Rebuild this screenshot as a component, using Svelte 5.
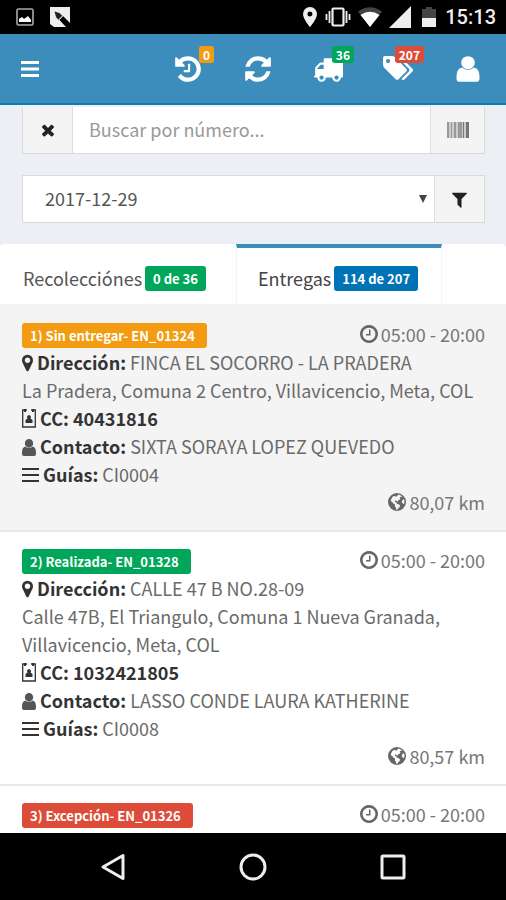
<script>
  const glyphs = {
    history: 'M1664 896q0 156-61 298t-164 245-245 164-298 61q-172 0-327-72.5t-264-204.5q-7-10-6.5-22.5t8.5-20.5l137-138q10-9 25-9 16 2 23 12 73 95 179 147t225 52q104 0 198.5-40.5t163.5-109.5 109.5-163.5 40.5-198.5-40.5-198.5-109.5-163.5-163.5-109.5-198.5-40.5q-98 0-188 35.5t-160 101.5l137 138q31 30 14 69-17 40-59 40h-448q-26 0-45-19t-19-45v-448q0-42 40-59 39-17 69 14l130 129q107-101 244.5-156.5t284.5-55.5q156 0 298 61t245 164 164 245 61 298zm-640-288v448q0 14-9 23t-23 9h-320q-14 0-23-9t-9-23v-64q0-14 9-23t23-9h224v-352q0-14 9-23t23-9h64q14 0 23 9t9 23z',
    refresh: 'M1639 1056q0 5-1 7-64 268-268 434.5t-478 166.5q-146 0-282.5-55t-243.5-157l-129 129q-19 19-45 19t-45-19-19-45v-448q0-26 19-45t45-19h448q26 0 45 19t19 45-19 45l-137 137q71 66 161 102t187 36q134 0 250-65t186-179q11-17 53-117 8-23 30-23h192q13 0 22.5 9.5t9.5 22.5zm25-800v448q0 26-19 45t-45 19h-448q-26 0-45-19t-19-45 19-45l138-138q-148-137-349-137-134 0-250 65t-186 179q-11 17-53 117-8 23-30 23h-199q-13 0-22.5-9.5t-9.5-22.5v-7q65-268 270-434.5t480-166.5q146 0 284 55.5t245 156.5l130-129q19-19 45-19t45 19 19 45z',
    truck: 'M640 1408q0-52-38-90t-90-38-90 38-38 90 38 90 90 38 90-38 38-90zm-384-512h384v-256h-158q-13 0-22 9l-195 195q-9 9-9 22v30zm1280 512q0-52-38-90t-90-38-90 38-38 90 38 90 90 38 90-38 38-90zm256-1088v1024q0 15-4 26.5t-13.5 18.5-16.5 11.5-23.5 6-22.5 2-25.5 0-22.5-.5q0 106-75 181t-181 75-181-75-75-181h-384q0 106-75 181t-181 75-181-75-75-181h-64q-3 0-22.5.5t-25.5 0-22.5-2-23.5-6-16.5-11.5-13.5-18.5-4-26.5q0-26 19-45t45-19v-320q0-8-.5-35t0-38 2.5-34.5 6.5-37 14-30.5 22.5-30l198-198q19-19 50.5-32t58.5-13h160v-192q0-26 19-45t45-19h1024q26 0 45 19t19 45z',
    tags: 'M448 448q0-53-37.5-90.5t-90.5-37.5-90.5 37.5-37.5 90.5 37.5 90.5 90.5 37.5 90.5-37.5 37.5-90.5zm1067 576q0 53-37 90l-491 492q-39 37-91 37-53 0-90-37l-715-716q-38-37-64.5-101t-26.5-117v-416q0-52 38-90t90-38h416q53 0 117 26.5t102 64.5l715 714q37 39 37 91zm384 0q0 53-37 90l-491 492q-39 37-91 37-36 0-59-14t-53-45l470-470q37-37 37-90 0-52-37-91l-715-714q-38-38-102-64.5t-117-26.5h224q53 0 117 26.5t102 64.5l715 714q37 39 37 91z',
    user: 'M896 128a410 390 0 1 1 0 780a410 390 0 1 1 0-780zM530 810q366 280 732 0q320 60 320 560v110q0 184-184 184h-1004q-184 0-184-184v-110q0-500 320-560z',
    times: 'M1490 1322q0 40-28 68l-136 136q-28 28-68 28t-68-28l-294-294-294 294q-28 28-68 28t-68-28l-136-136q-28-28-28-68t28-68l294-294-294-294q-28-28-28-68t28-68l136-136q28-28 68-28t68 28l294 294 294-294q28-28 68-28t68 28l136 136q28 28 28 68t-28 68l-294 294 294 294q28 28 28 68z',
    filter: 'M1595 295q17 41-14 70l-493 493v742q0 42-39 59-13 5-25 5-27 0-45-19l-256-256q-19-19-19-45v-486l-493-493q-31-29-14-70 17-39 59-39h1280q42 0 59 39z',
    clock: 'M1024 544v448q0 14-9 23t-23 9h-320q-14 0-23-9t-9-23v-64q0-14 9-23t23-9h224v-352q0-14 9-23t23-9h64q14 0 23 9t9 23zm416 352q0-148-73-273t-198-198-273-73-273 73-198 198-73 273 73 273 198 198 273 73 273-73 198-198 73-273zm224 0q0 209-103 385.5t-279.5 279.5-385.5 103-385.5-103-279.5-279.5-103-385.5 103-385.5 279.5-279.5 385.5-103 385.5 103 279.5 279.5 103 385.5z',
    marker: 'M1152 640q0-106-75-181t-181-75-181 75-75 181 75 181 181 75 181-75 75-181zm256 0q0 109-33 179l-364 774q-16 33-47.5 52t-67.5 19-67.5-19-46.5-52l-365-774q-33-70-33-179 0-212 150-362t362-150 362 150 150 362z',
    globe: 'M896 128a768 768 0 1 0 0 1536a768 768 0 1 0 0-1536zM1010 260q190 30 330 176l-70 40-90-30-60 60 70 70-40 110-120 30-60 110-130 10-30-90-100 50 20 100 130 40 20 110 130 30 150 110-40 150-110 80-60 130-130 10-10-180-100-110 20-150-130-70-110-160-130-70 20-90q50-190 190-320l130-30 80 60 90-20zM1330 760l100-90 80 40q30 110 20 230l-60 150-90-90-80-60z',
  };

  const actions = [
    { icon: 'history', label: 'Historial', count: '0', tone: 'orange' },
    { icon: 'refresh', label: 'Actualizar' },
    { icon: 'truck', label: 'Recolecciones', count: '36', tone: 'green' },
    { icon: 'tags', label: 'Entregas', count: '207', tone: 'red' },
    { icon: 'user', label: 'Usuario' },
  ];

  const deliveries = [
    {
      title: '1) Sin entregar- EN_01324', tone: 'orange', hours: '05:00 - 20:00', shaded: true,
      address: 'FINCA EL SOCORRO - LA PRADERA',
      place: 'La Pradera, Comuna 2 Centro, Villavicencio, Meta, COL',
      cc: '40431816', contact: 'SIXTA SORAYA LOPEZ QUEVEDO', guide: 'CI0004', distance: '80,07 km',
    },
    {
      title: '2) Realizada- EN_01328', tone: 'green', hours: '05:00 - 20:00',
      address: 'CALLE 47 B NO.28-09',
      place: 'Calle 47B, El Triangulo, Comuna 1 Nueva Granada, Villavicencio, Meta, COL',
      cc: '1032421805', contact: 'LASSO CONDE LAURA KATHERINE', guide: 'CI0008', distance: '80,57 km',
    },
    { title: '3) Excepción- EN_01326', tone: 'red', hours: '05:00 - 20:00' },
  ];

  let query = $state('');
  let day = $state('2017-12-29');
  let tab = $state('entregas');
</script>

{#snippet icon(name, size, box = '0 0 1792 1792')}
  <svg class="icon" width={size} height={size} viewBox={box} fill="currentColor" fill-rule={name === 'user' ? 'nonzero' : 'evenodd'} aria-hidden="true"><path d={glyphs[name]} /></svg>
{/snippet}

<div class="screen">
  <div class="status">
    <svg width="18" height="18" viewBox="0 0 18 18" aria-hidden="true">
      <rect x="1" y="1" width="16" height="16" rx="1.5" fill="none" stroke="#aaa" stroke-width="1.6" />
      <path d="M3 14V11l3-2 2 2 4-3 3 4v2z" fill="#fff" />
    </svg>
    <svg class="note" width="22" height="22" viewBox="0 0 22 22" aria-hidden="true">
      <path d="M1 1h20v20H5l-4-3z" fill="#eee" />
      <path d="M5.500 5.500l5 1.500 3 3-4 4-2.500-3z" fill="#222" />
      <path d="M10.500 14l3.500-4 7 7v4h-4z" fill="#000" />
      <path d="M10 13.500l3.500-3.500" stroke="#eee" stroke-width="1" />
    </svg>
    <span class="spacer"></span>
    <svg width="16" height="20" viewBox="0 0 16 20" aria-hidden="true">
      <path d="M8 0a7 7 0 0 1 7 7c0 5-7 13-7 13S1 12 1 7a7 7 0 0 1 7-7zm0 4.500a2.500 2.500 0 1 0 0 5 2.500 2.500 0 0 0 0-5z" fill="#eee" fill-rule="evenodd" />
    </svg>
    <svg width="26" height="20" viewBox="0 0 26 20" fill="none" stroke="#eee" aria-hidden="true">
      <rect x="7.500" y="1.500" width="11" height="17" rx="1" stroke-width="2.200" />
      <path d="M4.500 4v12M21.500 4v12M1.500 7v6M24.500 7v6" stroke-width="1.800" />
    </svg>
    <svg width="24" height="20" viewBox="0 0 24 20" aria-hidden="true">
      <path d="M0 4.500Q12-4 24 4.500L12 20z" fill="#444" />
      <path d="M2.500 8Q12 1.500 21.500 8L12 20z" fill="#fff" />
    </svg>
    <svg width="22" height="22" viewBox="0 0 22 22" aria-hidden="true"><path d="M22 0v22H0z" fill="#eee" /></svg>
    <svg class="battery" width="14" height="20" viewBox="0 0 14 20" aria-hidden="true">
      <path d="M4 0h6v2h4v9H0V2h4z" fill="#444" /><path d="M0 11h14v9H0z" fill="#eee" />
    </svg>
    <time>15:13</time>
  </div>

  <header>
    <button class="menu" aria-label="Menú">
      <svg width="18" height="16" viewBox="0 0 18 16" fill="currentColor" aria-hidden="true"><path d="M0 0h18v3H0zM0 6.500h18v3H0zM0 13h18v3H0z" /></svg>
    </button>
    {#each actions as action}
      <button class="action" aria-label={action.label}>
        <span class="mark">
          {@render icon(action.icon, 30, action.icon === 'tags' ? '0 60 1900 1792' : undefined)}
          {#if action.count}<span class="count {action.tone}">{action.count}</span>{/if}
        </span>
      </button>
    {/each}
  </header>

  <main>
    <form class="filters" onsubmit={(e) => e.preventDefault()}>
      <div class="group search">
        <button type="button" aria-label="Borrar" onclick={() => (query = '')}>{@render icon('times', 18)}</button>
        <input type="text" aria-label="Buscar por número" placeholder="Buscar por número..." bind:value={query} />
        <button type="button" class="wide" aria-label="Escanear código">
          <svg width="22" height="16" viewBox="0 0 22 16" aria-hidden="true">
            <path d="M0 0h22v16H0z" fill="#ccc" />
            <path d="M0 0h2v16H0zM4 0h1v16H4zM7 0h2v16H7zM11 0h4v16h-4z" fill="#999" />
            <path d="M16 0h1v16h-1zM19 0h3v16h-3z" fill="#777" />
          </svg>
        </button>
      </div>
      <div class="group">
        <div class="picker">
          <select aria-label="Fecha" bind:value={day}><option>2017-12-29</option></select>
          <svg width="8" height="8" viewBox="0 0 8 8" aria-hidden="true"><path d="M0 0h8L4 8z" fill="#444" /></svg>
        </div>
        <button type="submit" aria-label="Filtrar">{@render icon('filter', 19)}</button>
      </div>
    </form>

    <div class="tabs" role="tablist">
      <button role="tab" aria-selected={tab === 'recolecciones'} onclick={() => (tab = 'recolecciones')}>Recolecciónes <span class="label green">0 de 36</span></button>
      <button role="tab" aria-selected={tab === 'entregas'} onclick={() => (tab = 'entregas')}>Entregas <span class="label blue">114 de 207</span></button>
    </div>

    <ul>
      {#each deliveries as d}
        <li class:shaded={d.shaded}>
          <div class="top">
            <span class="label {d.tone}">{d.title}</span>
            <span class="meta">{@render icon('clock', 18, '128 128 1536 1536')}{d.hours}</span>
          </div>
          {#if d.address}
            <p>
              <svg class="icon dark" width="11" height="18" viewBox="384 128 1024 1536" fill="currentColor" fill-rule="evenodd" aria-hidden="true"><path d={glyphs.marker} /></svg>
              <b>Dirección:</b> {d.address}
            </p>
            <p>{d.place}</p>
            <p>
              <svg class="icon dark" width="14" height="19" viewBox="0 0 14 19" aria-hidden="true">
                <path d="M.700 1h12.600v17H.700z" fill="none" stroke="currentColor" stroke-width="1.300" />
                <path d="M2 0h2v3H2zM10 0h2v3h-2zM3.500 14v-3l2-1.500a2 2 0 1 1 3 0l2 1.500v3z" fill="currentColor" />
                <path d="M5 0h4v2H5z" fill="#f4f4f4" />
              </svg>
              <b>CC: {d.cc}</b>
            </p>
            <p>
              <svg class="icon grey" width="14" height="17" viewBox="210 128 1372 1536" preserveAspectRatio="none" fill="currentColor" aria-hidden="true"><path d={glyphs.user} /></svg>
              <b>Contacto:</b> {d.contact}
            </p>
            <p>
              <svg class="icon dark bars" width="17" height="14" viewBox="0 0 17 14" fill="currentColor" aria-hidden="true"><path d="M0 0h17v2H0zM0 6h17v2H0zM0 12h17v2H0z" /></svg>
              <b>Guías:</b> {d.guide}
            </p>
            <div class="meta end">{@render icon('globe', 18, '128 128 1536 1536')}{d.distance}</div>
          {/if}
        </li>
      {/each}
    </ul>
  </main>

  <nav aria-label="Sistema">
    <button aria-label="Atrás"><svg width="26" height="28" viewBox="0 0 26 28" aria-hidden="true"><path d="M23 2.500v23L3 14z" /></svg></button>
    <button aria-label="Inicio"><svg width="28" height="28" viewBox="0 0 28 28" aria-hidden="true"><circle cx="14" cy="14" r="12" /></svg></button>
    <button aria-label="Recientes"><svg width="26" height="26" viewBox="0 0 26 26" aria-hidden="true"><rect x="2" y="2" width="22" height="22" rx="1" /></svg></button>
  </nav>
</div>

<style>
  :global(body) { margin: 0; }
  .screen {
    display: flex;
    flex-direction: column;
    height: 100vh;
    background: #fff;
    color: #6a6a6a;
    font: 18px/28px "Noto Sans CJK SC", "Noto Sans", sans-serif;
  }
  button, input, select { font: inherit; color: inherit; }
  button { margin: 0; padding: 0; border: 0; background: none; cursor: pointer; }
  svg { display: block; flex: none; }

  .status {
    display: flex;
    align-items: center;
    gap: 7px;
    flex: none;
    height: 34px;
    padding: 0 10px 0 16px;
    background: #000;
    color: #eee;
  }
  .note { margin-left: 8px; }
  .spacer { flex: 1; }
  .battery { margin-left: 4px; }
  time { font: 500 20px/34px Roboto, sans-serif; margin-left: 2px; }

  header {
    display: flex;
    flex: none;
    height: 69px;
    padding: 0 3px 0 0;
    background: #3c8dbc;
    border-bottom: 2px solid #0e7db0;
    color: #fff;
  }
  .menu { width: 60px; display: flex; align-items: center; justify-content: center; margin-right: auto; }
  .action { width: 70px; display: flex; align-items: center; justify-content: center; }
  .mark { position: relative; }
  .count {
    position: absolute;
    right: -11px;
    top: -8px;
    padding: 0 4px;
    border-radius: 3px;
    font-size: 12px;
    line-height: 17px;
    font-weight: 700;
  }
  .green { background: #00a65a; }
  .orange { background: #f39c12; }
  .red { background: #dd4b39; }
  .blue { background: #0073b7; }

  main { flex: 1; min-height: 0; overflow: hidden; background: #ecf0f5; }
  .filters { padding: 2px 21px 21px 22px; }
  .group { display: flex; height: 46px; border: 1px solid #d8dade; background: #fff; }
  .group.search { border-top: 0; margin-bottom: 21px; }
  .group button {
    display: flex;
    align-items: center;
    justify-content: center;
    width: 50px;
    background: #f4f4f4;
    color: #222;
    border-left: 1px solid #ddd;
  }
  .group button:first-child { border-left: 0; border-right: 1px solid #ddd; }
  .group button.wide { width: 54px; }
  .group input { flex: 1; min-width: 0; padding: 0 16px 2px; border: 0; outline: 0; background: none; }
  .group input::placeholder { color: #999; opacity: 1; }
  .picker { position: relative; flex: 1; }
  .picker select { width: 100%; height: 100%; padding: 0 22px 2px; border: 0; appearance: none; background: none; color: #555; }
  .picker svg { position: absolute; right: 7px; top: 19px; pointer-events: none; }

  .tabs { display: flex; height: 60px; background: #fff; border-radius: 4px 4px 0 0; }
  .tabs button {
    display: flex;
    align-items: center;
    gap: 3px;
    padding: 4px 30px 0 23px;
    border-top: 4px solid transparent;
    color: #555;
  }
  .tabs button[aria-selected="true"] {
    padding: 4px 23px 0 21px;
    border-top-color: #3c8dbc;
    border-left: 1px solid #f4f4f4;
    border-right: 1px solid #f4f4f4;
    color: #444;
  }
  .label {
    display: inline-block;
    padding: 0 8px;
    border-radius: 3px;
    color: #fff;
    font-size: 13px;
    line-height: 25px;
    font-weight: 700;
    white-space: nowrap;
  }

  ul { margin: 0; padding: 2px 0 0; list-style: none; background: #f4f4f4; }
  li { padding: 14px 21px 14px 22px; border-bottom: 2px solid #e8e8e8; background: #fff; }
  li.shaded { background: #f4f4f4; }
  .top { display: flex; justify-content: space-between; align-items: flex-end; height: 28px; }
  .top .label { padding-right: 12px; }
  p { margin: 0; }
  p .icon { display: inline-block; vertical-align: -2px; }
  p .bars { vertical-align: 0; }
  .dark, b { color: #333; }
  .grey { color: #555; }
  .meta { display: flex; align-items: center; gap: 3px; color: #777; }
  .meta .icon { color: #666; }
  .end { justify-content: flex-end; }

  nav { display: flex; flex: none; justify-content: center; height: 67px; background: #000; }
  nav button { width: 140px; display: flex; align-items: center; justify-content: center; }
  nav svg { fill: none; stroke: #eee; stroke-width: 3; stroke-linejoin: round; }
</style>
